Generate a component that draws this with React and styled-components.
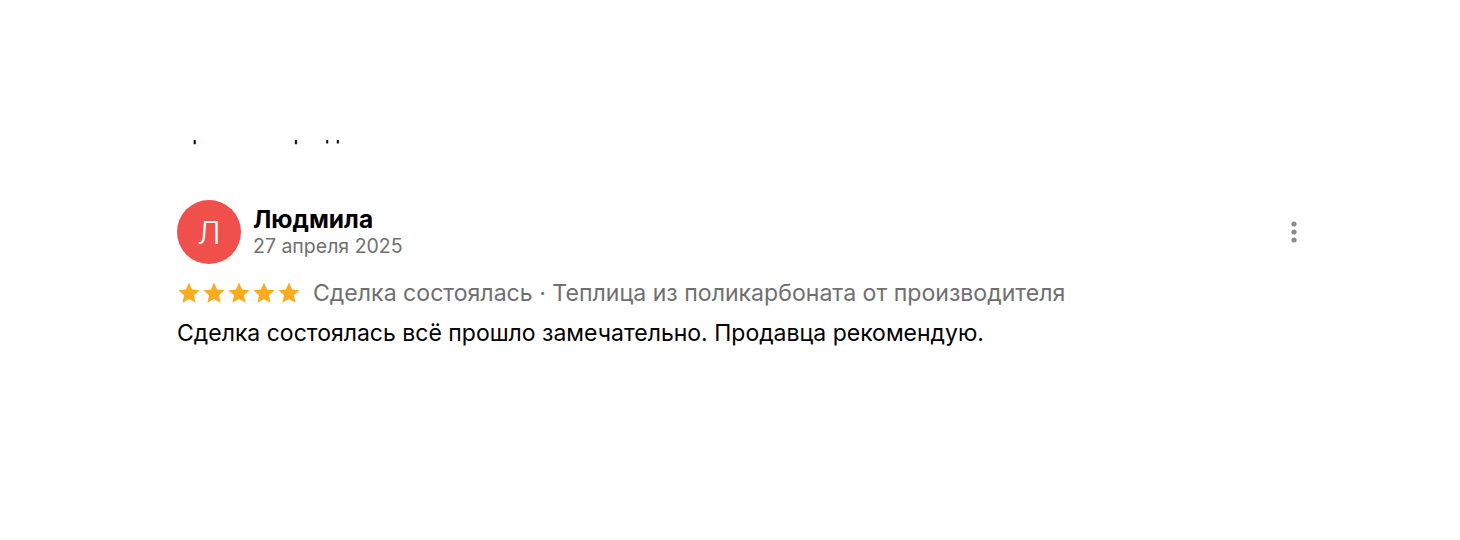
import React from "react";
import styled, { createGlobalStyle } from "styled-components";

const Global = createGlobalStyle`
  html, body { margin: 0; padding: 0; background: #fff; }
  body { font-family: Inter, "Noto Sans", sans-serif; color: #000; }
`;

const Page = styled.div`
  width: 1460px;
  height: 540px;
  box-sizing: border-box;
  padding: 140px 160px 0 177px;
  display: flex;
  flex-direction: column;
`;

const ClippedLine = styled.div`
  height: 6px;
  overflow: hidden;
  display: flex;
  align-items: flex-end;
  margin-left: 2px;
`;

const ClippedText = styled.div`
  font-size: 22px;
  line-height: 27px;
  white-space: nowrap;
  flex-shrink: 0;
`;

const Review = styled.div`
  margin-top: 54px;
  display: flex;
  flex-direction: column;
`;

const Header = styled.div`
  display: flex;
  align-items: center;
  gap: 12px;
`;

const Avatar = styled.div`
  width: 64px;
  height: 64px;
  border-radius: 50%;
  background: #f0504c;
  color: #fff;
  display: flex;
  align-items: center;
  justify-content: center;
  font-size: 31px;
  font-weight: 300;
  flex-shrink: 0;
`;

const Who = styled.div`
  display: flex;
  flex-direction: column;
  flex: 1;
`;

const Name = styled.div`
  font-size: 24.5px;
  font-weight: 700;
  line-height: 28px;
  color: #000;
`;

const DateText = styled.div`
  font-size: 19.5px;
  line-height: 26px;
  color: #707070;
`;

const More = styled.button`
  border: 0;
  background: none;
  padding: 0;
  width: 24px;
  height: 24px;
  display: flex;
  align-items: center;
  justify-content: center;
  margin-right: -6px;
`;

const Meta = styled.div`
  margin-top: 14px;
  display: flex;
  align-items: center;
  gap: 12px;
  font-size: 23.1px;
  line-height: 30px;
  color: #6f6f6f;
`;

const Stars = styled.div`
  display: flex;
  gap: 1px;
`;

const Body = styled.div`
  margin-top: 10px;
  font-size: 23px;
  line-height: 30px;
  color: #000;
`;

const Star = () => (
  <svg width="24" height="24" viewBox="0 0 24 24">
    <path
      d="M12 1.6l3.1 6.9 7.5.7-5.7 5.1 1.7 7.4L12 17.9l-6.6 3.8 1.7-7.4-5.7-5.1 7.5-.7z"
      fill="#fbab1d"
    />
  </svg>
);

export default function App() {
  return (
    <>
      <Global />
      <Page>
        <ClippedLine>
          <ClippedText>проблем при доставке не возникло</ClippedText>
        </ClippedLine>
        <Review>
          <Header>
            <Avatar>Л</Avatar>
            <Who>
              <Name>Людмила</Name>
              <DateText>27 апреля 2025</DateText>
            </Who>
            <More aria-label="Ещё">
              <svg width="6" height="22" viewBox="0 0 6 22">
                <circle cx="3" cy="3" r="2.6" fill="#8c8c8c" />
                <circle cx="3" cy="11" r="2.6" fill="#8c8c8c" />
                <circle cx="3" cy="19" r="2.6" fill="#8c8c8c" />
              </svg>
            </More>
          </Header>
          <Meta>
            <Stars>
              {[0, 1, 2, 3, 4].map((i) => (
                <Star key={i} />
              ))}
            </Stars>
            <span>Сделка состоялась · Теплица из поликарбоната от производителя</span>
          </Meta>
          <Body>Сделка состоялась всё прошло замечательно. Продавца рекомендую.</Body>
        </Review>
      </Page>
    </>
  );
}
